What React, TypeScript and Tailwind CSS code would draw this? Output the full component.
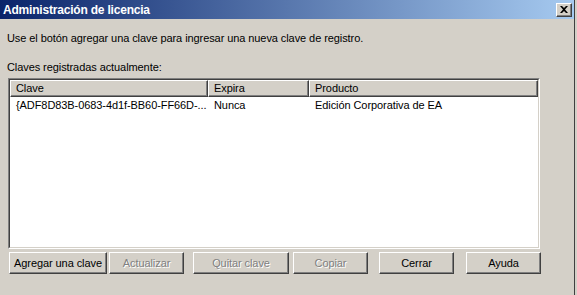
import React from "react";

const font = { fontFamily: '"Liberation Sans", Arial, sans-serif' };

function Btn({ label, w, disabled }: { label: string; w: string; disabled?: boolean }) {
  return (
    <div
      className={`${w} h-[22px] flex items-center justify-center text-[11px] tracking-[-0.08px] border border-t-white border-l-white border-r-[#404040] border-b-[#404040] shadow-[inset_-1px_-1px_0_#808080] ${
        disabled ? "text-[#808080] [text-shadow:1px_1px_0_#fff]" : "text-black"
      }`}
    >
      {label}
    </div>
  );
}

export default function App() {
  return (
    <div className="w-[577px] h-[295px] bg-[#D4D0C8] overflow-hidden flex tracking-[-0.08px]" style={font}>
      <div className="w-[575px] h-full border-r border-[#404040] flex flex-col">
        <div className="h-[19px] flex items-center justify-between bg-[linear-gradient(to_right,#0A246A,#A6CAF0)] pl-[3px] pr-[2px]">
          <span className="text-white font-bold text-[12px] leading-none tracking-[-0.2px]">Administración de licencia</span>
          <div className="w-[16px] h-[14px] bg-[#D4D0C8] border border-t-white border-l-white border-r-[#404040] border-b-[#404040] shadow-[inset_-1px_-1px_0_#808080] flex items-center justify-center">
            <svg width="8" height="7" viewBox="0 0 8 7">
              <path d="M0 0h2l2 2 2-2h2L5 3.5 8 7H6L4 5 2 7H0l3-3.5z" fill="#000" />
            </svg>
          </div>
        </div>
        <div className="text-[11px] leading-[13px] text-black ml-[7px] mt-[13px]">
          Use el botón agregar una clave para ingresar una nueva clave de registro.
        </div>
        <div className="text-[11px] leading-[13px] text-black ml-[7px] mt-[16px]">
          Claves registradas actualmente:
        </div>
        <div className="ml-[8px] mt-[4px] w-[532px] h-[171px] border border-t-[#808080] border-l-[#808080] border-r-white border-b-white">
          <div className="w-full h-full bg-white border border-t-[#404040] border-l-[#404040] border-r-[#D4D0C8] border-b-[#D4D0C8]">
            <div className="flex h-[17px] text-[11px]">
              <div className="w-[198px] bg-[#D4D0C8] border border-t-white border-l-white border-r-[#404040] border-b-[#404040] shadow-[inset_-1px_-1px_0_#808080] pl-[5px] flex items-center">Clave</div>
              <div className="w-[101px] bg-[#D4D0C8] border border-t-white border-l-white border-r-[#404040] border-b-[#404040] shadow-[inset_-1px_-1px_0_#808080] pl-[5px] flex items-center">Expira</div>
              <div className="w-[229px] bg-[#D4D0C8] border border-t-white border-l-white border-r-[#404040] border-b-[#404040] shadow-[inset_-1px_-1px_0_#808080] pl-[5px] flex items-center">Producto</div>
            </div>
            <div className="flex h-[14px] text-[11px] items-center mt-[1px]">
              <div className="w-[198px] pl-[6px] whitespace-nowrap overflow-hidden">{"{ADF8D83B-0683-4d1f-BB60-FF66D-..."}</div>
              <div className="w-[101px] pl-[6px]">Nunca</div>
              <div className="w-[229px] pl-[6px]">Edición Corporativa de EA</div>
            </div>
          </div>
        </div>
        <div className="flex mt-[3px] ml-[9px]">
          <Btn label="Agregar una clave" w="w-[98px]" />
          <div className="w-[2px]" />
          <Btn label="Actualizar" w="w-[75px]" disabled />
          <div className="w-[9px]" />
          <Btn label="Quitar clave" w="w-[96px]" disabled />
          <div className="w-[4px]" />
          <Btn label="Copiar" w="w-[75px]" disabled />
          <div className="w-[11px]" />
          <Btn label="Cerrar" w="w-[75px]" />
          <div className="w-[12px]" />
          <Btn label="Ayuda" w="w-[75px]" />
        </div>
      </div>
    </div>
  );
}
